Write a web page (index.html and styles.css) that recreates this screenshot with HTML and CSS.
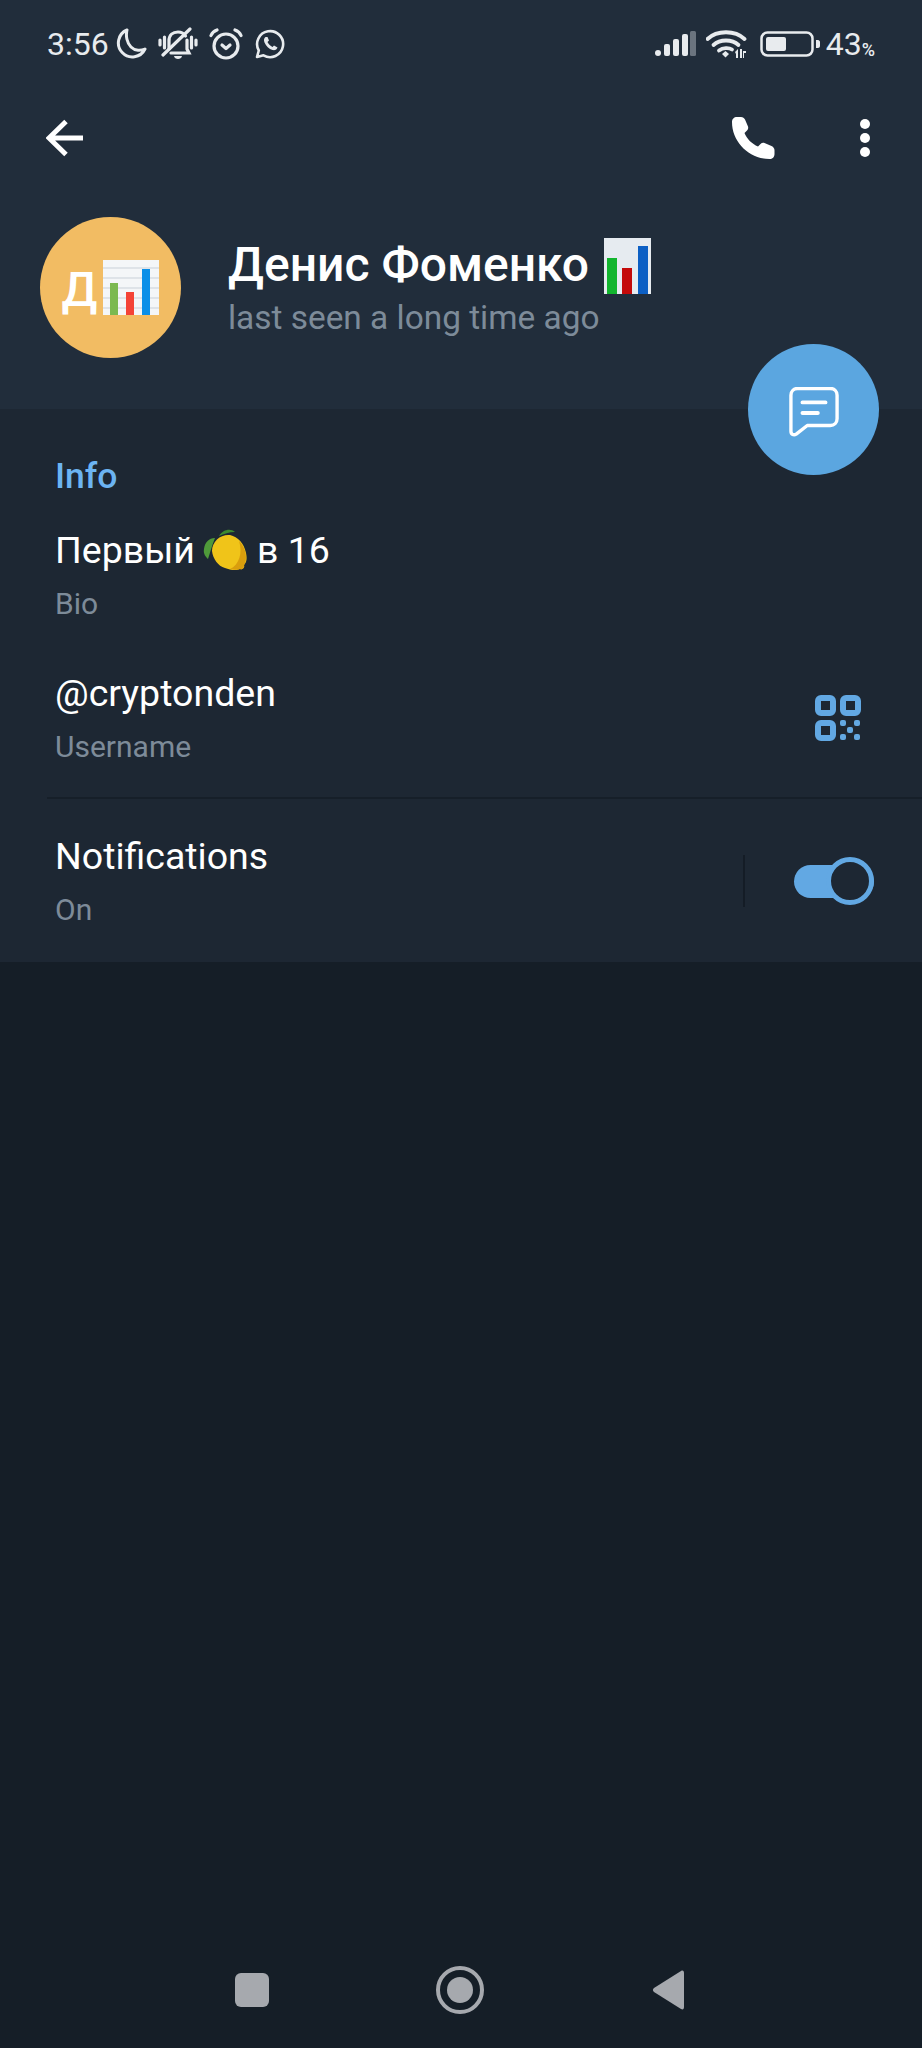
FILE: index.html
```html
<!DOCTYPE html>
<html lang="en">
<head>
  <meta charset="UTF-8" />
  <meta name="viewport" content="width=device-width, initial-scale=1" />
  <title>Денис Фоменко</title>
  <link rel="stylesheet" href="styles.css">
</head>
<body>

  <header class="top">
    <div class="statusbar">
      <div class="status-left">
        <span class="time">3:56</span>
        <svg class="st-moon" width="32" height="32" viewBox="0 0 32 32"><path d="M12 2A14 14 0 1 0 30 21C26 23 20 23 16 19C12 15 10.500 8 12 2Z" fill="none" stroke="#e8ebee" stroke-width="3" stroke-linejoin="round"/></svg>
        <svg class="st-bell" width="40" height="34" viewBox="0 0 40 34"><g fill="none" stroke="#e8ebee" stroke-width="3.200" stroke-linecap="round"><path d="M11 22V14C11 8 15 5 20 5C23 5 26 6.500 27.500 9M29 13V22L31 26H13"/><path d="M32 2L5 28"/><path d="M2 13V18M6.500 10V21M33.500 10V21M38 13V18"/></g><path d="M16 29H24C23.500 33 16.500 33 16 29Z" fill="#e8ebee"/></svg>
        <svg class="st-alarm" width="34" height="32" viewBox="0 0 34 32"><g fill="none" stroke="#e8ebee" stroke-width="3.200" stroke-linecap="round" stroke-linejoin="round"><circle cx="17" cy="18" r="12"/><path d="M13 17L17 20.500L21 17"/><path d="M2 7.500C3 5 5 3 8 2M32 7.500C31 5 29 3 26 2"/></g></svg>
        <svg class="st-wa" width="30" height="30" viewBox="0 0 30 30"><path d="M2 28L3.800 21.500A13 13 0 1 1 8.500 26.300Z" fill="none" stroke="#e8ebee" stroke-width="2.600" stroke-linejoin="round"/><path d="M10.500 8C9 9 8.500 11 9.500 13.500C11 17 14 20 17.500 21C20 21.500 22 20.500 22.500 18.500L19 16.500L17.500 18C15.500 17 13 14.500 12.500 13L14 11.500L12.500 8Z" fill="#e8ebee"/></svg>
      </div>
      <div class="status-right">
        <svg class="st-signal" width="41" height="26" viewBox="0 0 41 26"><g fill="#e8ebee"><rect x="0" y="19" width="6" height="6" rx="3"/><rect x="9" y="13" width="6" height="12" rx="2"/><rect x="18" y="8" width="6" height="17" rx="2"/><rect x="27" y="3" width="6" height="22" rx="2"/></g><rect x="35" y="0" width="6" height="25" rx="1.500" fill="#6b747f"/></svg>
        <svg class="st-wifi" width="41" height="30" viewBox="0 0 41 30"><g fill="none" stroke="#e8ebee" stroke-width="3.800" stroke-linecap="round"><path d="M1.500 10C11 1 29 1 38.500 10"/><path d="M7.500 16C14 10 26 10 32.500 16"/><path d="M13 21.500C17 18.500 23 18.500 26 20.500"/></g><path d="M16 25L19.500 22L23 25L19.500 28.500Z" fill="#e8ebee"/><path d="M29 23L32 20V29H30V25ZM34 20H36V29H34ZM37 22H40V24H38V29H37Z" fill="#e8ebee"/></svg>
        <svg class="st-batt" width="60" height="26" viewBox="0 0 60 26"><rect x="1.500" y="1.500" width="51" height="23" rx="6" fill="none" stroke="#e8ebee" stroke-width="2.500"/><rect x="6" y="6" width="20" height="14" rx="2" fill="#e8ebee"/><path d="M56 9H58C59 9 60 10 60 11V15C60 16 59 17 58 17H56Z" fill="#e8ebee"/></svg>
        <span class="batt-num">43</span><span class="batt-pct">%</span>
      </div>
    </div>

    <div class="toolbar">
      <svg width="38" height="38" viewBox="0 0 38 38"><path d="M37 19H4M20 2.500L3 19L20 35.500" fill="none" stroke="#fff" stroke-width="5"/></svg>
      <div class="toolbar-right">
        <svg width="44" height="44" viewBox="0 0 44 44"><path d="M10 1C12 1 13 2 14 3.500L17 10.500C17.500 12 17 13.500 16 14.500L13.500 17C15.500 22.500 21 28 27 30.500L29.500 28C30.500 27 32 26.500 33.500 27L40.500 30C42.500 31 43.500 32.500 43.500 34.500V38C43.500 41 41.500 43 38.500 43C18 43 1 26 1 6C1 3 3 1 6 1Z" fill="#fff"/></svg>
        <div class="dots"><i></i><i></i><i></i></div>
      </div>
    </div>

    <div class="profile">
      <div class="avatar">
        <span>Д</span>
        <svg width="56" height="55" viewBox="0 0 56 55"><rect width="56" height="55" fill="#f4f6f8"/><g stroke="#c9d0d8" stroke-width="1"><path d="M0 8H56M0 18H56M0 28H56M0 38H56M0 48H56"/></g><rect x="7" y="23" width="8" height="32" fill="#7cb950"/><rect x="23" y="32" width="8" height="23" fill="#f44336"/><rect x="39" y="9" width="8" height="46" fill="#0b8fe8"/></svg>
      </div>
      <div class="profile-text">
        <div class="name">Денис Фоменко
          <svg class="name-emoji" width="47" height="56" viewBox="0 0 47 56"><rect width="47" height="56" fill="#e6ebf0"/><rect x="3" y="20" width="10" height="36" fill="#12b52e"/><rect x="18" y="30" width="10" height="26" fill="#c40a0a"/><rect x="34" y="8" width="10" height="48" fill="#0c5fc4"/></svg>
        </div>
        <div class="last-seen">last seen a long time ago</div>
      </div>
    </div>
  </header>

  <button class="fab">
    <svg width="50" height="50" viewBox="0 0 52 52"><path d="M9 1.500H43C47 1.500 50 4.500 50 8.500V33C50 37 47 40 43 40H19L7.500 49C5 50.500 2 49.500 2 46V8.500C2 4.500 5 1.500 9 1.500Z" fill="none" stroke="#fff" stroke-width="3.500" stroke-linejoin="round"/><path d="M14 16H38M14 27H30" stroke="#fff" stroke-width="4" stroke-linecap="round"/></svg>
  </button>

  <section class="info">
    <div class="info-title">Info</div>

    <div class="row">
      <div class="row-main">
        Первый
        <svg class="lemon" width="44" height="42" viewBox="0 0 44 42"><path d="M12 9C6 9 2 13 1 20C0 25 3 28 5 30C7 24 9 16 12 9Z" fill="#4f9a3a"/><path d="M16 7C20 0 28 -1 32 3C26 3 21 5 16 7Z" fill="#3d8a2f"/><path d="M9 22C9 12 18 5 27 6C35 8 41 14 43 24C44 29 44 33 41 36C42 39 39 41 37 40C33 42 27 41 22 39C15 37 10 30 9 22Z" fill="#f0c419"/><path d="M36 12C40 16 43 22 43 28C43 32 42 35 41 36C42 39 39 41 37 40C34 41 31 41 27 40C36 36 40 24 36 12Z" fill="#d99e0d"/></svg>
        <span class="after-lemon">в 16</span>
      </div>
      <div class="row-sub">Bio</div>
    </div>

    <div class="row row-user">
      <div>
        <div class="row-main">@cryptonden</div>
        <div class="row-sub">Username</div>
      </div>
      <svg class="qr" width="46" height="46" viewBox="0 0 46 46"><g fill="none" stroke="#62a8e3" stroke-width="6"><rect x="3" y="3" width="15" height="15" rx="3"/><rect x="28" y="3" width="15" height="15" rx="3"/><rect x="3" y="28" width="15" height="15" rx="3"/></g><g fill="#62a8e3"><rect x="25" y="25" width="6" height="6" rx="2"/><rect x="39" y="25" width="6" height="6" rx="2"/><rect x="32" y="32" width="6" height="6" rx="2"/><rect x="25" y="39" width="6" height="6" rx="2"/><rect x="39" y="39" width="6" height="6" rx="2"/></g></svg>
    </div>

    <div class="row row-notif">
      <div>
        <div class="row-main">Notifications</div>
        <div class="row-sub">On</div>
      </div>
      <div class="row-actions">
        <div class="vline"></div>
        <div class="switch"><div class="knob"></div></div>
      </div>
    </div>
  </section>

  <div class="spacer"></div>

  <footer class="navbar">
    <div class="nav-square"></div>
    <div class="nav-circle"><div></div></div>
    <svg width="34" height="42" viewBox="0 0 34 42"><path d="M30 2L3 19C1.500 20 1.500 22 3 23L30 40C32 41 33 40 33 38V4C33 2 32 1 30 2Z" fill="#a6a9ae"/></svg>
  </footer>

</body>
</html>
```

FILE: styles.css
```css
:root {
  --header-bg: #212d3b;
  --section-bg: #1d2733;
  --page-bg: #151e27;
  --accent: #62a8e3;
  --muted: #7d8b99;
  --status: #e8ebee;
}

* {
  box-sizing: border-box;
}

body {
  margin: 0;
  height: 2048px;
  position: relative;
  display: flex;
  flex-direction: column;
  background-color: var(--page-bg);
  color: white;
  font-family: Roboto, 'Liberation Sans', sans-serif;
}

.top {
  height: 409px;
  background-color: var(--header-bg);
}

.statusbar {
  height: 88px;
  padding: 0 47px;
  display: flex;
  justify-content: space-between;
  align-items: center;
}

.status-left,
.status-right {
  display: flex;
  align-items: center;
}

.time {
  font-size: 32px;
  color: var(--status);
  margin-right: 6px;
}

.st-bell {
  margin-left: 11px;
}

.st-alarm {
  margin-left: 11px;
}

.st-wa {
  margin-left: 12px;
}

.st-wifi {
  margin-left: 10px;
}

.st-batt {
  margin-left: 13px;
}

.batt-num {
  font-size: 32px;
  color: var(--status);
  margin-left: 6px;
}

.batt-pct {
  font-size: 18px;
  font-weight: 500;
  color: var(--status);
  margin-top: 10px;
}

.toolbar {
  height: 100px;
  padding: 0 52px 0 46px;
  display: flex;
  justify-content: space-between;
  align-items: center;
}

.toolbar-right {
  display: flex;
  align-items: center;
  gap: 85px;
}

.dots {
  display: flex;
  flex-direction: column;
  gap: 4px;
}

.dots i {
  display: block;
  width: 10px;
  height: 10px;
  border-radius: 50%;
  background: white;
}

.profile {
  padding: 29px 0 0 40px;
  display: flex;
  gap: 47px;
}

.avatar {
  width: 141px;
  height: 141px;
  border-radius: 50%;
  background-color: #f2bc63;
  display: flex;
  align-items: center;
  justify-content: center;
  gap: 6px;
}

.avatar span {
  font-size: 48px;
  font-weight: 500;
  line-height: 55px;
  margin-top: 3px;
}

.profile-text {
  padding-top: 19px;
}

.name {
  font-size: 48px;
  font-weight: 500;
  line-height: 58px;
  display: flex;
  align-items: center;
  gap: 15px;
}

.name-emoji {
  margin-top: 2px;
}

.last-seen {
  font-size: 33.400px;
  line-height: 40px;
  color: var(--muted);
  margin-top: 4px;
}

.fab {
  position: absolute;
  left: 748px;
  top: 344px;
  width: 131px;
  height: 131px;
  padding: 0;
  border: none;
  border-radius: 50%;
  background-color: #5ba6e0;
  display: flex;
  align-items: center;
  justify-content: center;
}

.fab svg {
  margin-top: 5px;
}

.info {
  height: 553px;
  background-color: var(--section-bg);
  padding-top: 47px;
}

.info-title {
  font-size: 35.500px;
  font-weight: 500;
  line-height: 40px;
  color: #6cb4f2;
  padding-left: 55px;
}

.row {
  padding: 0 0 0 55px;
}

.row-main {
  font-size: 37.500px;
  line-height: 44px;
  display: flex;
  align-items: center;
  gap: 8px;
}

.after-lemon {
  margin-left: 2px;
}

.row-sub {
  font-size: 30px;
  line-height: 36px;
  color: var(--muted);
  margin-top: 14px;
}

.row > .row-main {
  margin-top: 32px;
}

.row-user {
  margin-top: 49px;
  padding-right: 61px;
  display: flex;
  justify-content: space-between;
  align-items: center;
}

.qr {
  margin-top: -1px;
}

.row-notif {
  position: relative;
  margin-top: 32px;
  margin-left: 47px;
  padding: 35px 48px 0 8px;
  border-top: 2px solid #161f29;
  display: flex;
  justify-content: space-between;
  align-items: center;
}

.row-actions {
  display: flex;
  align-items: center;
  gap: 49px;
}

.vline {
  width: 2px;
  height: 52px;
  background-color: #141c26;
}

.switch {
  width: 80px;
  height: 33px;
  border-radius: 17px;
  background-color: var(--accent);
  position: relative;
}

.knob {
  position: absolute;
  right: 0;
  top: -8px;
  width: 48px;
  height: 48px;
  border-radius: 50%;
  border: 5px solid var(--accent);
  background-color: var(--section-bg);
}

.spacer {
  flex: 1;
}

.navbar {
  height: 117px;
  padding: 0 237px 0 235px;
  display: flex;
  justify-content: space-between;
  align-items: center;
}

.nav-square {
  width: 34px;
  height: 34px;
  border-radius: 6px;
  background-color: #a6a9ae;
}

.nav-circle {
  width: 48px;
  height: 48px;
  border-radius: 50%;
  border: 4px solid #a6a9ae;
  display: flex;
  align-items: center;
  justify-content: center;
}

.nav-circle div {
  width: 26px;
  height: 26px;
  border-radius: 50%;
  background-color: #a6a9ae;
}
```
